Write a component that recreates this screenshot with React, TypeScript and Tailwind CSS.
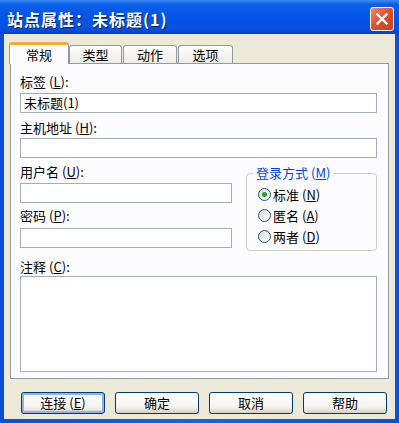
import React from "react";

const font = { fontFamily: '"Noto Sans CJK SC", "Noto Sans", sans-serif' };

function M({ c }: { c: string }) {
  return (
    <span className="ml-[3px]">
      (<span className="underline underline-offset-1">{c}</span>)
    </span>
  );
}

function Label({ text, m }: { text: string; m: string }) {
  return (
    <div className="h-[16px] leading-[16px] text-[13px] text-black whitespace-nowrap">
      {text}
      <M c={m} />:
    </div>
  );
}

function Input({ value, w }: { value?: string; w: string }) {
  return (
    <div
      className={`h-[20px] ${w} border border-[#a5acb5] bg-white px-[3px] text-[13px] leading-[18px] text-black`}
    >
      {value}
    </div>
  );
}

function Radio({ label, m, checked }: { label: string; m: string; checked?: boolean }) {
  return (
    <div className="flex items-center h-[21px] text-[13px] text-black">
      <div className="w-[13px] h-[13px] rounded-full border border-[#1c5180] bg-[linear-gradient(135deg,#dcdcd6,#ffffff)] flex items-center justify-center mr-[2px]">
        {checked && <div className="w-[5px] h-[5px] rounded-full bg-[#21a121]" />}
      </div>
      <span>{label}</span>
      <M c={m} />
    </div>
  );
}

function Btn({ text, m, def }: { text: string; m?: string; def?: boolean }) {
  return (
    <div
      className={`w-[84px] h-[22px] rounded-[3px] border border-[#003c74] flex items-center justify-center text-[13px] text-black bg-[linear-gradient(to_bottom,#ffffff,#f4f3ee_70%,#d6d0c5)] ${
        def ? "shadow-[inset_0_0_0_2px_#8cb4f2]" : ""
      }`}
    >
      {text}
      {m && <M c={m} />}
    </div>
  );
}

export default function App() {
  return (
    <div
      className="w-[399px] h-[423px] flex flex-col bg-[linear-gradient(to_right,#0a4fd8,#1660ea_50%,#0a4fd8)] overflow-hidden"
      style={font}
    >
      {/* Title bar */}
      <div className="h-[34px] flex items-center justify-between pl-[7px] pr-[5px] bg-[linear-gradient(to_bottom,#3d8df7_0%,#0a60ea_12%,#0355e6_45%,#0450e2_85%,#0b3fc6_100%)]">
        <div className="text-white font-bold text-[16px] tracking-[1px] [text-shadow:1px_1px_0_#0a1f6b] pt-[3px]">
          站点属性：未标题(1)
        </div>
        <div className="w-[24px] h-[24px] mt-[4px] rounded-[3px] border border-white bg-[linear-gradient(135deg,#f08a6a,#e2522f_45%,#c9401f)] flex items-center justify-center">
          <svg width="14" height="14" viewBox="0 0 14 14">
            <path d="M2.5 2.5 L11.5 11.5 M11.5 2.5 L2.5 11.5" stroke="white" strokeWidth="2.4" strokeLinecap="square" />
          </svg>
        </div>
      </div>

      {/* Body */}
      <div className="flex-1 mx-[4px] mb-[4px] bg-[#ece9d8] px-[6px] flex flex-col">
        {/* Tabs */}
        <div className="flex items-end h-[29px] pt-[8px] ml-[-1px] relative z-10">
          <div className="w-[60px] h-[22px] -mb-[1px] bg-[#fcfcfe] border border-b-0 border-[#919b9c] rounded-t-[3px] border-t-[3px] border-t-[#f2a83a] flex items-center justify-center text-[13px] text-black">
            常规
          </div>
          <div className="w-[53px] h-[18px] bg-[linear-gradient(to_bottom,#ffffff,#ecebe5)] border border-b-0 border-[#919b9c] rounded-t-[3px] flex items-center justify-center text-[13px] text-black">
            类型
          </div>
          <div className="w-[54px] h-[18px] ml-[1px] bg-[linear-gradient(to_bottom,#ffffff,#ecebe5)] border border-b-0 border-[#919b9c] rounded-t-[3px] flex items-center justify-center text-[13px] text-black">
            动作
          </div>
          <div className="w-[55px] h-[18px] ml-[1px] bg-[linear-gradient(to_bottom,#ffffff,#ecebe5)] border border-b-0 border-[#919b9c] rounded-t-[3px] flex items-center justify-center text-[13px] text-black">
            选项
          </div>
        </div>

        {/* Panel */}
        <div className="h-[316px] border border-[#919b9c] bg-[#fcfcfe] pl-[9px] pr-[11px] pt-[10px] flex flex-col">
          <Label text="标签" m="L" />
          <div className="mt-[3px]">
            <Input value="未标题(1)" w="w-full" />
          </div>
          <div className="mt-[7px]">
            <Label text="主机地址" m="H" />
          </div>
          <div className="mt-[2px]">
            <Input w="w-full" />
          </div>

          <div className="flex mt-[6px]">
            <div className="w-[212px] flex flex-col">
              <Label text="用户名" m="U" />
              <div className="mt-[3px]">
                <Input w="w-[212px]" />
              </div>
              <div className="mt-[5px]">
                <Label text="密码" m="P" />
              </div>
              <div className="mt-[4px]">
                <Input w="w-[212px]" />
              </div>
            </div>
            <div className="ml-[14px] flex-1 relative mt-[9px] h-[78px] border border-[#d0d0bf] rounded-[4px] pl-[11px] pt-[10px]">
              <div className="absolute left-[6px] top-[-9px] px-[3px] bg-[#fcfcfe] h-[16px] leading-[16px] text-[13px] text-[#0046d5] whitespace-nowrap">
                登录方式
                <M c="M" />
              </div>
              <Radio label="标准" m="N" checked />
              <Radio label="匿名" m="A" />
              <Radio label="两者" m="D" />
            </div>
          </div>

          <div className="mt-[8px]">
            <Label text="注释" m="C" />
          </div>
          <div className="mt-[1px] h-[96px] w-full border border-[#a5acb5] bg-white" />
        </div>

        {/* Buttons */}
        <div className="flex gap-[10px] ml-[11px] mt-[13px]">
          <Btn text="连接" m="E" def />
          <Btn text="确定" />
          <Btn text="取消" />
          <Btn text="帮助" />
        </div>
      </div>
    </div>
  );
}
